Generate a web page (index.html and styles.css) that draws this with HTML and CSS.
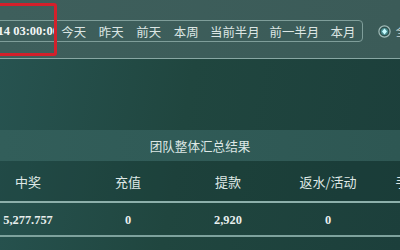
FILE: index.html
```html
<!DOCTYPE html>
<html lang="zh-CN">
<head>
<meta charset="utf-8">
<link rel="stylesheet" href="styles.css">
</head>
<body>
<div class="page">
  <div class="toolbar">
    <div class="range">
      <div class="date-input"><span class="date-text">2024-07-14 03:00:00</span></div>
      <div class="quick">
        <span class="btn">今天</span>
        <span class="btn">昨天</span>
        <span class="btn">前天</span>
        <span class="btn">本周</span>
        <span class="btn">当前半月</span>
        <span class="btn">前一半月</span>
        <span class="btn">本月</span>
      </div>
    </div>
    <div class="radio">
      <svg class="radio-icon" width="13" height="13" viewBox="0 0 13 13">
        <circle cx="6.5" cy="6.5" r="5.6" fill="#2e504d" stroke="#a3bdba" stroke-width="1.2"/>
        <circle cx="6.5" cy="6.5" r="3.6" fill="#6fe3ef" opacity="0.4"/>
        <path d="M6.5 3.4 L9 6.5 L6.5 9.6 L4 6.5 Z" fill="#c9fbff"/>
      </svg>
      <span class="radio-label">全部</span>
    </div>
    <div class="mark"></div>
  </div>
  <div class="main">
    <div class="summary">
      <div class="summary-title">团队整体汇总结果</div>
      <div class="table">
        <div class="row head">
          <div class="cell">中奖</div>
          <div class="cell">充值</div>
          <div class="cell">提款</div>
          <div class="cell">返水/活动</div>
          <div class="cell">手续费合计</div>
        </div>
        <div class="row data">
          <div class="cell">5,277.757</div>
          <div class="cell">0</div>
          <div class="cell">2,920</div>
          <div class="cell">0</div>
          <div class="cell">0</div>
        </div>
      </div>
    </div>
  </div>
</div>
</body>
</html>
```

FILE: styles.css
```css
* { box-sizing: border-box; }

html, body {
  margin: 0;
  padding: 0;
  width: 400px;
  height: 250px;
  overflow: hidden;
  background: #1f4541;
  font-family: "Noto Sans CJK SC", "Noto Sans", sans-serif;
  color: #e3ebe9;
}

.page {
  width: 400px;
  height: 250px;
  overflow: hidden;
}

.toolbar {
  position: relative;
  height: 59px;
  padding-top: 20px;
  display: flex;
  align-items: flex-start;
  background: linear-gradient(90deg, #3e5f5c 0%, #3b5b58 100%);
  border-bottom: 1px solid #88a7a3;
}

.range {
  display: flex;
  align-items: center;
  height: 22px;
  margin-left: -20px;
  border: 1px solid #7f9e9a;
  border-radius: 4px;
}

.date-input {
  width: 74px;
  height: 20px;
  overflow: hidden;
  display: flex;
  justify-content: flex-end;
  align-items: center;
  padding-top: 1px;
}

.date-text {
  flex: none;
  white-space: nowrap;
  margin-right: -4px;
  font-family: "Liberation Serif", serif;
  font-weight: bold;
  font-size: 12.5px;
  color: #f2f5f4;
}

.quick {
  display: flex;
  align-items: center;
  padding-top: 1px;
}

.btn {
  min-width: 37.5px;
  padding: 0 5px;
  text-align: center;
  font-size: 12.4px;
  line-height: 20px;
  color: #dce6e4;
  white-space: nowrap;
}

.radio {
  display: flex;
  align-items: center;
  gap: 5px;
  height: 22px;
  margin-left: 15px;
}

.radio-icon {
  flex: none;
  display: block;
}

.radio-label {
  font-size: 12.4px;
  color: #c9d6d4;
  white-space: nowrap;
}

.mark {
  position: absolute;
  left: -10px;
  top: 3px;
  width: 67px;
  height: 53px;
  border: 3px solid #d3202b;
  border-radius: 3px;
}

.main {
  height: 191px;
  padding-top: 71px;
  background: linear-gradient(100deg, #275350 0%, #20463f 45%, #1c3f3b 100%);
}

.summary-title {
  height: 31px;
  line-height: 31px;
  text-align: center;
  font-size: 12.6px;
  color: #dde7e5;
  background: linear-gradient(90deg, #325e5a 0%, #2e5753 100%);
}

.table {
  margin-left: -22px;
  width: 522px;
}

.row {
  display: grid;
  grid-template-columns: repeat(5, 100px);
}

.row.head {
  height: 42px;
  align-items: center;
  border-bottom: 2px solid #8db0ab;
  font-size: 13px;
  color: #dfe8e6;
  background: rgba(20, 52, 48, 0.25);
}

.row.data {
  height: 34px;
  padding-top: 3px;
  align-items: center;
  border-bottom: 2px solid #7ea29d;
  font-family: "Liberation Serif", serif;
  font-weight: bold;
  font-size: 12.4px;
  color: #e9efee;
}

.cell {
  text-align: center;
  white-space: nowrap;
}
```
